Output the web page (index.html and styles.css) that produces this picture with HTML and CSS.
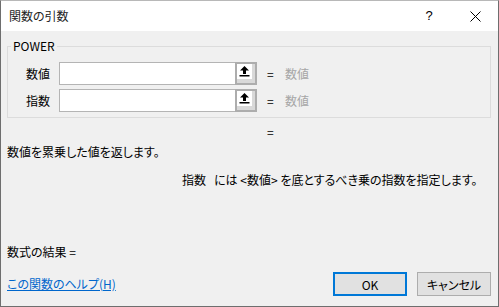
FILE: index.html
```html
<!DOCTYPE html>
<html lang="ja">
<head>
    <meta charset="UTF-8">
    <title>関数の引数</title>
    <link rel="stylesheet" href="styles.css">
</head>
<body>
    <div class="window">
        <div class="titlebar">
            <div class="title">関数の引数</div>
            <div class="tbtn help">?</div>
            <div class="tbtn close">
                <svg width="11" height="11" viewBox="0 0 11 11"><path d="M0.5 0.5L10.5 10.5M10.5 0.5L0.5 10.5" stroke="#000" stroke-width="1" fill="none"/></svg>
            </div>
        </div>
        <div class="content">
            <fieldset class="group">
                <legend>POWER</legend>
                <div class="line">
                    <label>数値</label>
                    <div class="field"></div>
                    <div class="pick"><span class="pickface"><svg width="15" height="15" viewBox="0 0 15 15"><path d="M7.5 2L3 6.5H12Z M6 6.5H9V10H6Z M2.5 11H12.5V12.5H2.5Z" fill="#000"/></svg></span></div>
                    <span class="eq">=</span>
                    <span class="val">数値</span>
                </div>
                <div class="line">
                    <label>指数</label>
                    <div class="field"></div>
                    <div class="pick"><span class="pickface"><svg width="15" height="15" viewBox="0 0 15 15"><path d="M7.5 2L3 6.5H12Z M6 6.5H9V10H6Z M2.5 11H12.5V12.5H2.5Z" fill="#000"/></svg></span></div>
                    <span class="eq">=</span>
                    <span class="val">数値</span>
                </div>
            </fieldset>
            <div class="result-eq">=</div>
            <div class="desc">数値を累乗した値を返します。</div>
            <div class="argdesc">指数&nbsp;&nbsp;&nbsp;には &lt;数値&gt; を底とするべき乗の指数を指定します。</div>
            <div class="formula">数式の結果 =</div>
            <div class="footer">
                <a href="#" class="helplink">この関数のヘルプ(H)</a>
                <button type="button" class="btn ok">OK</button>
                <button type="button" class="btn">キャンセル</button>
            </div>
        </div>
    </div>
</body>
</html>
```
FILE: styles.css
```css
html,body{
    margin: 0;
    padding: 0;
    background-color: #f0f0f0;
}
body{
    font-family: "Noto Sans CJK JP", "Noto Sans", sans-serif;
    font-size: 12px;
    line-height: 16px;
    color: #000;
    font-feature-settings: "palt";
}
.window{
    width: 499px;
    height: 307px;
    box-sizing: border-box;
    border: 1px solid #6e6e6e;
    border-top-color: #b8b8b8;
    background-color: #f0f0f0;
    overflow: hidden;
}
.titlebar{
    height: 30px;
    background-color: #fff;
    display: flex;
    align-items: center;
}
.title{
    flex: 1;
    padding-left: 8px;
    color: #222;
}
.tbtn{
    width: 46px;
    height: 30px;
    display: flex;
    align-items: center;
    justify-content: center;
}
.help{
    font-family: "Liberation Sans", sans-serif;
    font-size: 13px;
}
.content{
    padding: 0 7px 0 6px;
}
.group{
    margin: 7px 0 0;
    padding: 0 0 5px 3px;
    border: 1px solid #dcdcdc;
}
.group legend{
    padding: 0 2px;
    line-height: 16px;
}
.line{
    display: flex;
    align-items: center;
    height: 23px;
    margin-top: 4px;
}
.group legend + .line{
    margin-top: 8px;
}
.line label{
    width: 33px;
    margin-left: 15px;
}
.field{
    width: 175px;
    height: 21px;
    background-color: #fff;
    border: 1px solid #b4b4b4;
    border-right: none;
}
.pick{
    width: 22px;
    height: 23px;
    box-sizing: border-box;
    border: 2px solid #adadad;
    border-left-width: 2px;
    background-color: #d9d9d9;
    padding: 0;
}
.pickface{
    display: block;
    width: 15px;
    height: 15px;
    background-color: #fff;
}
.pickface svg{
    display: block;
}
.eq{
    width: 18px;
    margin-left: 10px;
}
.val{
    color: #a6a6a6;
}
.result-eq{
    margin-top: 6px;
    padding-left: 260px;
}
.desc{
    margin-top: 4px;
}
.argdesc{
    margin-top: 12px;
    padding-left: 175px;
}
.formula{
    margin-top: 56px;
}
.footer{
    display: flex;
    align-items: center;
    margin-top: 12px;
    height: 24px;
}
.helplink{
    flex: 1;
    color: #0066cc;
    text-decoration: underline;
}
.btn{
    width: 74px;
    height: 24px;
    box-sizing: border-box;
    border: 1px solid #adadad;
    background-color: #e1e1e1;
    font-family: inherit;
    font-size: 12px;
    font-feature-settings: "palt";
    color: #000;
    margin-left: 10px;
    padding: 0;
}
.btn.ok{
    border: 2px solid #0078d7;
    margin-left: 0;
}
```
